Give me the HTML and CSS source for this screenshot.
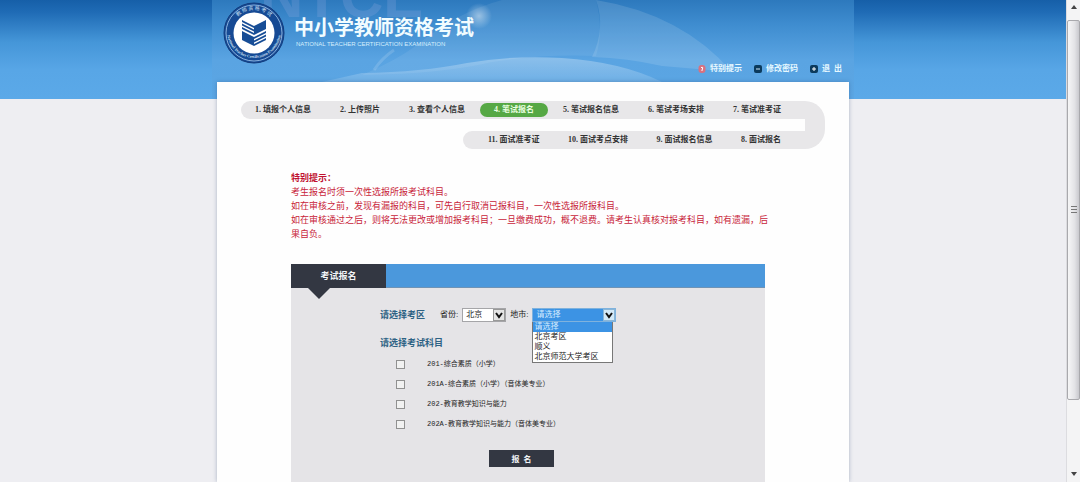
FILE: index.html
```html
<!DOCTYPE html>
<html lang="zh-CN">
<head>
<meta charset="utf-8">
<meta name="viewport" content="width=device-width, initial-scale=1">
<title>中小学教师资格考试</title>
<link rel="stylesheet" href="styles.css">
</head>
<body>
<div class="page">
  <div class="container">
    <header class="banner">
      <svg class="banner-art" viewBox="0 0 642 99" preserveAspectRatio="none" aria-hidden="true">
        <defs>
          <linearGradient id="wave" x1="0" y1="0" x2="0" y2="1">
            <stop offset="0" stop-color="#fff" stop-opacity=".3"/>
            <stop offset="1" stop-color="#fff" stop-opacity=".12"/>
          </linearGradient>
          <radialGradient id="flare">
            <stop offset="0" stop-color="#fff" stop-opacity=".45"/>
            <stop offset="1" stop-color="#fff" stop-opacity="0"/>
          </radialGradient>
        </defs>
        <path d="M150 75Q185 60 205 45Q245 12 290 0H384Q392 30 384 56Q330 54 280 62Q230 74 150 75Z" fill="#fff" opacity=".07"/>
        <path d="M384 0Q470 14 520 72L450 66Q415 58 380 57Q394 28 384 0Z" fill="#fff" opacity=".12"/>
        <path d="M150 73Q210 72 255 63Q300 55 350 58Q410 62 450 82H110Z" fill="url(#wave)"/>
        <path d="M162 70Q170 58 182 50" fill="none" stroke="#fff" stroke-width="3" opacity=".14"/>
        <circle cx="267" cy="16" r="13" fill="url(#flare)"/>
        <text class="watermark" x="48" y="17">NTCE</text>
      </svg>
      <div class="brand">
        <svg class="logo" viewBox="0 0 62 62" role="img" aria-label="教师资格考试">
          <defs>
            <path id="arc-top" d="M8 31A23 23 0 0 1 54 31"/>
            <path id="arc-bottom" d="M4 29A27 27 0 0 0 58 29"/>
          </defs>
          <circle cx="31" cy="31" r="30" fill="#164a94" stroke="#123b7c"/>
          <circle cx="31" cy="31" r="28" fill="none" stroke="#a9cdf0" stroke-width=".8"/>
          <circle cx="31" cy="31" r="20.5" fill="#fff"/>
          <text class="logo-cn" text-anchor="middle"><textPath href="#arc-top" startOffset="50%">教 师 资 格 考 试</textPath></text>
          <text class="logo-en" text-anchor="middle"><textPath href="#arc-bottom" startOffset="50%">National Teacher Certification Examination</textPath></text>
          <g fill="#174d96">
            <path d="M31 24L43 18V27L31 33L19 27V25L31 31V29.500L19 23.500V21.500L31 27.500V26L19 20V18Z"/>
            <path d="M19 29L31 35L43 29V31L31 37V38.500L43 32.500V34.500L31 40.500V42L43 36V38L31 44L19 38Z"/>
          </g>
        </svg>
        <div class="brand-text">
          <h1 class="brand-title">中小学教师资格考试</h1>
          <p class="brand-sub">NATIONAL TEACHER CERTIFICATION EXAMINATION</p>
        </div>
      </div>
      <nav class="tools">
        <a class="tool" href="#"><svg class="tool-icon" viewBox="0 0 8 8" aria-hidden="true"><rect x=".5" width="7" height="8" rx="3" fill="#d9717f"/><path d="M3 2.5Q5.500 1.500 4.500 4L4 5V6" fill="none" stroke="#fff"/></svg>特别提示</a>
        <a class="tool" href="#"><svg class="tool-icon" viewBox="0 0 8 8" aria-hidden="true"><rect width="8" height="8" rx="2" fill="#0b3a5c"/><path d="M2 4H6" stroke="#cfe6f5"/></svg>修改密码</a>
        <a class="tool" href="#"><svg class="tool-icon" viewBox="0 0 8 8" aria-hidden="true"><rect width="8" height="8" rx="2" fill="#0b3a5c"/><path d="M2 4H6M4 2V6" stroke="#fff"/></svg>退&ensp;出</a>
      </nav>
    </header>

    <main class="card">
      <nav class="steps">
        <div class="steps-rows">
          <ol class="steps-row">
            <li>1. 填报个人信息</li>
            <li>2. 上传照片</li>
            <li>3. 查看个人信息</li>
            <li class="current">4. 笔试报名</li>
            <li>5. 笔试报名信息</li>
            <li>6. 笔试考场安排</li>
            <li>7. 笔试准考证</li>
          </ol>
          <ol class="steps-row steps-row-back">
            <li>11. 面试准考证</li>
            <li>10. 面试考点安排</li>
            <li>9. 面试报名信息</li>
            <li>8. 面试报名</li>
          </ol>
        </div>
        <div class="steps-turn"></div>
      </nav>

      <section class="notice">
        <h2 class="notice-title">特别提示：</h2>
        <p>考生报名时须一次性选报所报考试科目。</p>
        <p>如在审核之前，发现有漏报的科目，可先自行取消已报科目，一次性选报所报科目。</p>
        <p>如在审核通过之后，则将无法更改或增加报考科目；一旦缴费成功，概不退费。请考生认真核对报考科目，如有遗漏，后果自负。</p>
      </section>

      <section class="panel">
        <div class="panel-head"><h2 class="panel-tab">考试报名</h2></div>
        <form class="form">
          <div class="area">
            <h3 class="form-title">请选择考区</h3>
            <label class="field" for="province">省份:</label>
            <span class="select select-province">
              <select id="province"><option>北京</option></select>
              <svg class="arrow" viewBox="0 0 12 12" aria-hidden="true"><rect x=".5" y=".5" width="11" height="11" fill="#e4e4e4" stroke="#999"/><path d="M3 4L6 8L9 4" fill="none" stroke="#111" stroke-width="2"/></svg>
            </span>
            <label class="field" for="city">地市:</label>
            <span class="select select-city">
              <select id="city"><option>请选择</option></select>
              <svg class="arrow" viewBox="0 0 12 12" aria-hidden="true"><rect x=".5" y=".5" width="11" height="11" fill="#d3e9f7" stroke="#8ab6d8"/><path d="M3 4L6 8L9 4" fill="none" stroke="#111" stroke-width="2"/></svg>
              <ul class="menu" role="listbox" aria-label="地市">
                <li role="option" class="selected" aria-selected="true">请选择</li>
                <li role="option">北京考区</li>
                <li role="option">顺义</li>
                <li role="option">北京师范大学考区</li>
              </ul>
            </span>
          </div>
          <h3 class="form-title">请选择考试科目</h3>
          <div class="subjects">
            <label class="subject"><input type="checkbox">201-综合素质（小学）</label>
            <label class="subject"><input type="checkbox">201A-综合素质（小学）（音体美专业）</label>
            <label class="subject"><input type="checkbox">202-教育教学知识与能力</label>
            <label class="subject"><input type="checkbox">202A-教育教学知识与能力（音体美专业）</label>
          </div>
          <button class="submit" type="button">报&ensp;名</button>
        </form>
      </section>
    </main>
  </div>
</div>
<aside class="scrollbar" aria-hidden="true">
  <svg class="scroll-arrow" viewBox="0 0 6 4"><path d="M0 4L3 0L6 4Z" fill="#444"/></svg>
  <div class="scroll-track"><div class="scroll-thumb"><span class="grip"></span></div></div>
  <svg class="scroll-arrow" viewBox="0 0 6 4"><path d="M0 0L3 4L6 0Z" fill="#444"/></svg>
</aside>
</body>
</html>
```
FILE: styles.css
```css
* { box-sizing: border-box; }

body, h1, h2, h3, p, ol, ul { margin: 0; padding: 0; }
ol, ul { list-style: none; }

body {
  display: flex;
  min-height: 100vh;
  background: #eeeef2;
  color: #222;
  font: 8px/14px "Liberation Serif", "Noto Sans CJK SC", sans-serif;
}

.page {
  flex: 1;
  display: flex;
  justify-content: center;
  background: linear-gradient(#165fa8 0, #1f6bb5 12px, #4596d8 42px, #58a6e6 70px, #5ba9e8 99px, transparent 99px);
}

.container {
  position: relative;
  flex: 0 1 642px;
  display: flex;
  flex-direction: column;
  background: linear-gradient(#2d79bd 0, #3f8dd0 25px, #5aa4e2 60px, #5ba6e4 99px, transparent 99px);
}

/* Banner */
.banner {
  display: flex;
  justify-content: space-between;
  height: 82px;
  padding: 2px 12px 5px 11px;
}

.banner-art {
  position: absolute;
  inset: 0 0 auto;
  width: 100%;
  height: 99px;
}

.watermark {
  font: bold 60px "Liberation Sans", sans-serif;
  fill: #a9b4e6;
  opacity: .2;
}

.brand, .tools { position: relative; display: flex; }
.brand { gap: 9px; }
.logo { width: 62px; height: 62px; }
.logo-cn { font: 5px "Noto Sans CJK SC", sans-serif; fill: #cfe3f7; }
.logo-en { font: bold 4px "Liberation Serif", serif; fill: #cfe3f7; }
.brand-text { padding-top: 13px; color: #fff; }
.brand-title { font: bold 20px/24px "Noto Sans CJK SC", sans-serif; color: #f1fcff; }
.brand-sub { font: 6px/10px "Liberation Sans", sans-serif; color: #d5effc; padding-left: 2px; }

.tools { align-self: flex-end; gap: 12px; }
.tool {
  display: flex;
  align-items: center;
  gap: 4px;
  color: #e6f8ff;
  font-weight: bold;
  line-height: 16px;
  text-decoration: none;
}
.tool-icon { width: 8px; height: 8px; }

/* White content card */
.card {
  position: relative;
  flex: 1;
  display: flex;
  flex-direction: column;
  margin: 0 5px;
  padding-top: 19px;
  background: #fefefe;
  box-shadow: 0 0 4px rgba(40, 70, 110, .35);
}

.steps {
  display: flex;
  margin: 0 24px;
  color: #333;
  font-weight: bold;
}
.steps-rows {
  flex: 1;
  display: flex;
  flex-direction: column;
  gap: 12px;
}
.steps-row {
  display: flex;
  align-items: center;
  justify-content: space-between;
  height: 18px;
  padding: 0 24px 0 14px;
  border-radius: 9px 0 0 9px;
  background: #e8e7e9;
  white-space: nowrap;
}
.steps-row-back { width: 342px; align-self: flex-end; padding-left: 25px; }
.steps-turn { width: 20px; border-radius: 0 20px 20px 0; background: #e8e7e9; }
.current {
  margin: 0 -14px;
  padding: 0 14px;
  border-radius: 7px;
  background: #56a845;
  color: #e9ffe0;
}

.notice {
  margin: 22px 80px 0 74px;
  color: #c8243a;
  font-size: 9px;
}
.notice-title { color: #c01230; font-size: 9px; }

/* Registration panel */
.panel {
  flex: 1;
  margin: 23px 84px 0 74px;
  background: #e5e4e7;
}
.panel-head {
  height: 24px;
  background: #4b98dc;
  border-bottom: 1px solid #6f93b5;
}
.panel-tab {
  position: relative;
  width: 95px;
  background: #333742;
  color: #f2f4f7;
  font-size: 9px;
  line-height: 24px;
  text-align: center;
}
.panel-tab::after {
  content: "";
  position: absolute;
  top: 100%;
  left: 17px;
  border: solid transparent;
  border-width: 11px 11px 0;
  border-top-color: #333742;
}

.form { padding: 20px 0 14px 89px; }
.area { display: flex; align-items: center; }
.form-title { color: #2d6284; font-size: 9px; line-height: 14px; }
.area .form-title { margin-right: 15px; }
.area + .form-title { margin-top: 14px; }
.field { margin-right: 4px; }

.select { position: relative; display: flex; height: 14px; }
.select-province { width: 44px; margin-right: 4px; }
.select-city { width: 84px; }
.select select {
  appearance: none;
  width: 100%;
  padding: 0 3px;
  border: 1px solid #a5a5a8;
  border-radius: 0;
  background: #fff;
  color: #222;
  font: inherit;
  line-height: 12px;
}
.select-city select { background: #3c93e4; border-color: #7fb2dd; color: #d5ecff; }
.arrow { position: absolute; top: 1px; right: 1px; width: 12px; height: 12px; pointer-events: none; }

.menu {
  position: absolute;
  top: 100%;
  left: 0;
  width: 81px;
  border: 1px solid #777;
  border-top: 0;
  background: #fff;
  line-height: 10px;
}
.menu li { padding: 0 1px; }
.menu .selected { background: #3c93e4; color: #d5ecff; }

.subjects { padding: 4px 0 0 16px; }
.subject {
  display: flex;
  align-items: center;
  gap: 22px;
  height: 20px;
  font-size: 7px;
  font-family: "Liberation Mono", "Noto Sans CJK SC", monospace;
}
.subject input {
  appearance: none;
  width: 9px;
  height: 9px;
  margin: 0;
  border: 1px solid #909090;
  background: #f1f1f1;
}

.submit {
  display: block;
  width: 65px;
  height: 17px;
  margin: 16px 0 0 109px;
  padding: 0;
  border: 0;
  background: #333742;
  color: #f2f4f7;
  font: bold 8px/17px "Noto Sans CJK SC", sans-serif;
}

/* Window scrollbar */
.scrollbar {
  width: 14px;
  display: flex;
  flex-direction: column;
  align-items: center;
  padding: 5px 0 6px;
  border-left: 1px solid #dcdce0;
  background: #f4f4f5;
}
.scroll-arrow { width: 6px; height: 4px; }
.scroll-track { flex: 1; align-self: stretch; padding-top: 11px; }
.scroll-thumb {
  display: flex;
  align-items: center;
  justify-content: center;
  height: 84%;
  border: 1px solid #a9a9ad;
  border-radius: 2px;
  background: linear-gradient(90deg, #f6f6f7, #e3e3e6 60%, #c9c9ce);
}
.grip { width: 6px; height: 7px; background: repeating-linear-gradient(#777 0 1px, transparent 1px 3px); }
```
